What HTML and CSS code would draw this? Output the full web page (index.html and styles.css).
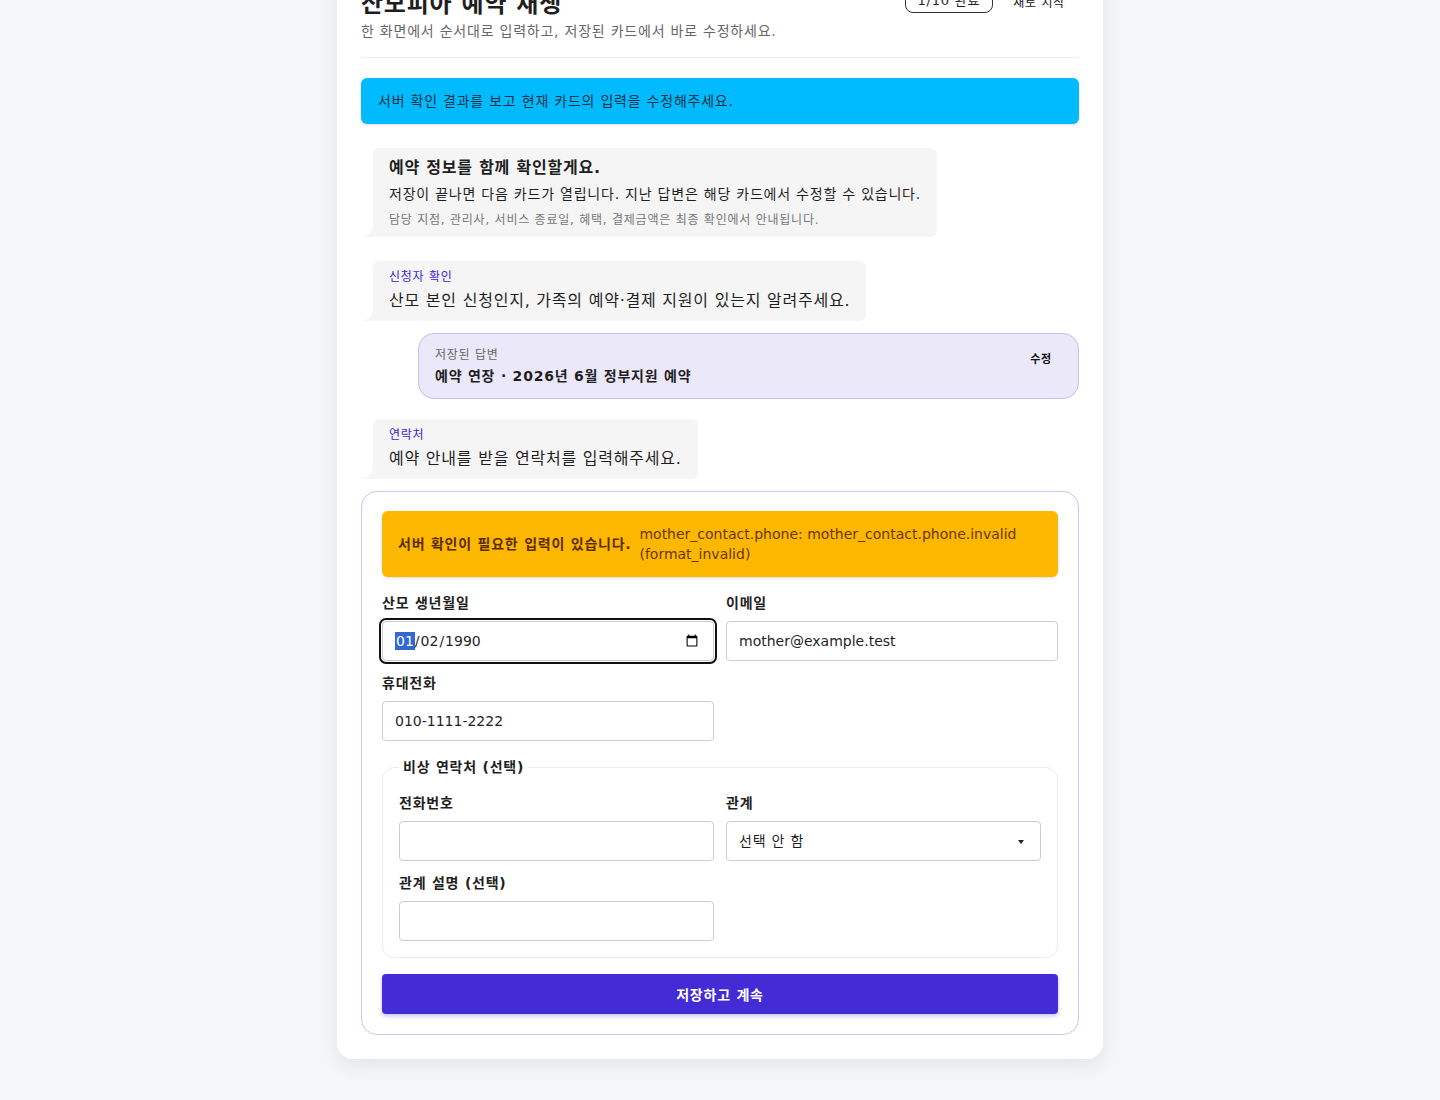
FILE: index.html
```html
<!DOCTYPE html>
<html lang="ko">
<head>
    <meta charset="UTF-8">
    <meta name="viewport" content="width=device-width, initial-scale=1.0">
    <title>산모피아 예약 재생</title>
    <link rel="stylesheet" href="styles.css">
</head>
<body>
    <main class="shell">
        <header class="top">
            <div>
                <h1>산모피아 예약 재생</h1>
                <p class="lead">한 화면에서 순서대로 입력하고, 저장된 카드에서 바로 수정하세요.</p>
            </div>
            <div class="top-actions">
                <span class="progress">1/10 완료</span>
                <button class="ghost">새로 시작</button>
            </div>
        </header>

        <div class="notice">서버 확인 결과를 보고 현재 카드의 입력을 수정해주세요.</div>

        <div class="thread">
            <div class="bubble intro">
                <h2>예약 정보를 함께 확인할게요.</h2>
                <p>저장이 끝나면 다음 카드가 열립니다. 지난 답변은 해당 카드에서 수정할 수 있습니다.</p>
                <small>담당 지점, 관리사, 서비스 종료일, 혜택, 결제금액은 최종 확인에서 안내됩니다.</small>
            </div>

            <div class="bubble">
                <span class="step">신청자 확인</span>
                <p class="ask">산모 본인 신청인지, 가족의 예약·결제 지원이 있는지 알려주세요.</p>
            </div>

            <div class="answer">
                <div>
                    <span class="answer-label">저장된 답변</span>
                    <strong>예약 연장 · 2026년 6월 정부지원 예약</strong>
                </div>
                <button class="edit">수정</button>
            </div>

            <div class="bubble">
                <span class="step">연락처</span>
                <p class="ask">예약 안내를 받을 연락처를 입력해주세요.</p>
            </div>

            <form class="step-form">
                <div class="error">
                    <strong>서버 확인이 필요한 입력이 있습니다.</strong>
                    <span class="error-code">mother_contact.phone: mother_contact.phone.invalid (format_invalid)</span>
                </div>

                <div class="grid">
                    <label class="field">
                        <span>산모 생년월일</span>
                        <input type="date" value="1990-01-02" autofocus>
                    </label>
                    <label class="field">
                        <span>이메일</span>
                        <input type="email" value="mother@example.test">
                    </label>
                    <label class="field">
                        <span>휴대전화</span>
                        <input type="tel" value="010-1111-2222">
                    </label>
                </div>

                <fieldset>
                    <legend>비상 연락처 (선택)</legend>
                    <div class="grid">
                        <label class="field">
                            <span>전화번호</span>
                            <input type="tel">
                        </label>
                        <label class="field">
                            <span>관계</span>
                            <span class="select-wrap">
                                <select>
                                    <option>선택 안 함</option>
                                    <option>배우자</option>
                                    <option>부모</option>
                                    <option>기타</option>
                                </select>
                            </span>
                        </label>
                        <label class="field">
                            <span>관계 설명 (선택)</span>
                            <input type="text">
                        </label>
                    </div>
                </fieldset>

                <button type="submit" class="primary">저장하고 계속</button>
            </form>
        </div>
    </main>
</body>
</html>
```

FILE: styles.css
```css
/* 한글 글자가 좁게 붙어 보여서 본문 전체에 자간을 조금 준다 */
body { margin: 0; background: #f5f6f7; color: #1f1f1f; font-family: "DejaVu Sans", "Noto Sans CJK KR", sans-serif; font-size: 14px; line-height: 20px; letter-spacing: .055em; }
button, select { font-family: inherit; letter-spacing: inherit; }
input { font-family: inherit; }

.shell { width: 718px; margin: -35px auto 41px; padding: 24px 24px 24px; background: #fff; border-radius: 16px; box-shadow: 0 6px 20px rgba(0, 0, 0, .08); }

/* 상단 제목 영역 */
.top { display: flex; justify-content: space-between; align-items: flex-start; padding-bottom: 16px; border-bottom: 1px solid #ececec; }
.top h1 { margin: 0; font-size: 24px; line-height: 30px; font-weight: 700; }
.lead { margin: 2px 0 0; color: #666; }
.top-actions { display: flex; align-items: center; gap: 10px; }
.progress { display: inline-block; height: 22px; line-height: 22px; padding: 0 12px; border: 1px solid #333; border-radius: 8px; font-size: 13px; }
.ghost { border: 0; background: none; padding: 0 14px 0 10px; height: 24px; font-size: 12px; color: #111; cursor: pointer; }

.notice { margin-top: 20px; padding: 13px 17px; background: #00bbff; color: #173243; border-radius: 6px; box-shadow: 0 1px 3px rgba(0, 0, 0, .12); }

/* 대화 카드 */
.thread { display: flex; flex-direction: column; align-items: flex-start; margin-top: 24px; }
.bubble { position: relative; margin-left: 12px; padding: 8px 16px; background: #f5f5f5; border-radius: 6px 6px 6px 0; }
.bubble::before { content: ""; position: absolute; left: -12px; bottom: 0; width: 12px; height: 12px; background: radial-gradient(circle at 0 0, transparent 11.5px, #f5f5f5 12px); }
.bubble h2 { margin: 0; font-size: 16px; line-height: 24px; font-weight: 700; }
.bubble p { margin: 4px 0 0; }
.bubble small { display: block; margin-top: 7px; font-size: 12px; line-height: 18px; color: #777; }
.intro { margin-bottom: 24px; }
.step { display: block; font-size: 12px; line-height: 16px; color: #3b26d6; }
.bubble .ask { font-size: 16px; line-height: 24px; }

.answer { align-self: stretch; display: flex; justify-content: space-between; align-items: flex-start; margin: 12px 0 20px 57px; padding: 12px 16px; background: #ebe8fa; border: 1px solid #c6bff4; border-radius: 16px; }
.answer-label { display: block; font-size: 12px; line-height: 18px; color: #666; }
.answer strong { display: block; margin-top: 2px; }
.edit { border: 0; background: none; height: 24px; padding: 0 10px; font-size: 11px; font-weight: 700; color: #111; cursor: pointer; }

/* 입력 폼 */
.step-form { align-self: stretch; margin-top: 12px; padding: 19px 20px 20px; border: 1px solid #cac4f5; border-radius: 16px; }
.error { display: flex; align-items: center; gap: 8px; padding: 13px 16px; background: #fcb800; color: #6b3500; border-radius: 6px; box-shadow: 0 1px 3px rgba(0, 0, 0, .15); }
.error strong { color: #5c2c00; white-space: nowrap; }
.error-code { letter-spacing: 0; }
.grid { display: grid; grid-template-columns: 1fr 1fr; gap: 12px; margin-top: 16px; }
.field { display: flex; flex-direction: column; gap: 8px; }
.field > span { font-weight: 700; }
.field input, .field select { box-sizing: border-box; width: 100%; height: 40px; padding: 0 12px; border: 1px solid #ccc; border-radius: 4px; background: #fff; font-size: 14px; color: #1f1f1f; }
.field input:focus { outline: 2px solid #111; outline-offset: 1px; }

/* 관계 선택 상자: 기본 화살표 대신 작은 삼각형 */
.select-wrap { position: relative; display: block; }
.select-wrap select { appearance: none; -webkit-appearance: none; }
.select-wrap::after { content: ""; position: absolute; right: 17px; top: 19px; border-left: 3.5px solid transparent; border-right: 3.5px solid transparent; border-top: 4px solid #222; pointer-events: none; }

fieldset { margin: 16px 0 0; padding: 0 16px 16px; border: 1px solid #ececec; border-radius: 12px; }
legend { padding: 0 4px; font-weight: 700; }
fieldset .grid { margin-top: 16px; }

.primary { display: block; width: 100%; height: 40px; margin-top: 16px; border: 0; border-radius: 4px; background: #432bd5; color: #fff; font-size: 14px; font-weight: 700; box-shadow: 0 2px 4px rgba(67, 43, 213, .3); cursor: pointer; }
```
